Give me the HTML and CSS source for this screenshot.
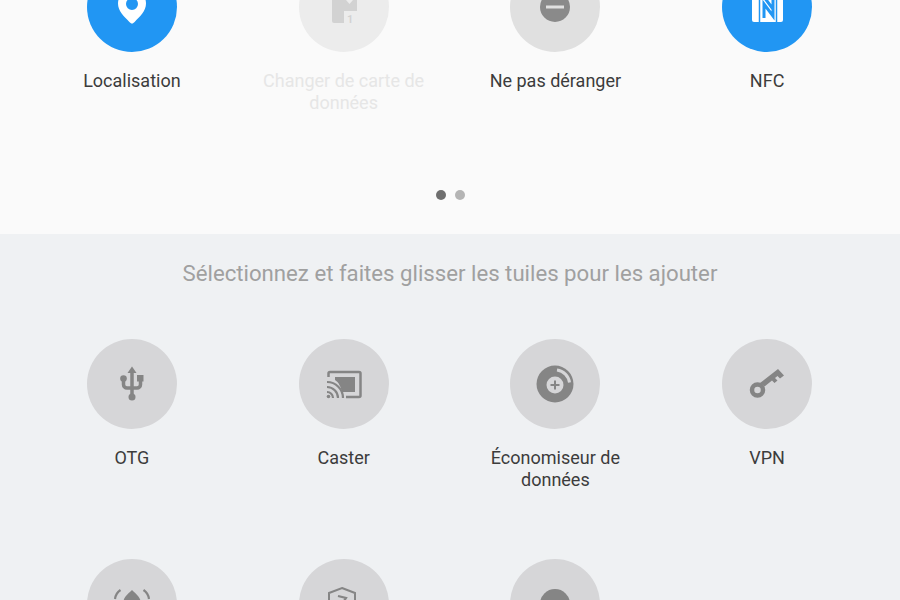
FILE: index.html
```html
<!DOCTYPE html>
<html lang="fr">
<head>
    <meta charset="UTF-8">
    <meta name="viewport" content="width=device-width, initial-scale=1.0">
    <title>Tuiles</title>
    <link rel="stylesheet" href="styles.css">
</head>
<body>
    <div class="active-panel">
        <div class="tile-grid">
            <div class="tile">
                <div class="tile-circle on">
                    <svg viewBox="0 0 90 90"><path fill="#fff" fill-rule="evenodd" d="M45 61.500c-1 0-1.800-.8-2.600-1.600C37 54.500 31 49 31 41.500 31 33.500 37.300 27 45 27s14 6.500 14 14.500c0 7.500-6 13-11.400 18.400-.8.800-1.600 1.600-2.600 1.600zM45 36a6 6 0 1 0 0 12 6 6 0 0 0 0-12z"/></svg>
                </div>
                <div class="tile-label">Localisation</div>
            </div>
            <div class="tile disabled">
                <div class="tile-circle">
                    <svg viewBox="0 0 90 90">
                        <path fill="#d2d2d2" d="M35 28h21a2 2 0 0 1 2 2v19H45v12H35a2 2 0 0 1-2-2V30a2 2 0 0 1 2-2z"/>
                        <path fill="#ececec" d="M47 38h7l-3.500 4z"/>
                        <text class="sim-num" x="48" y="61">1</text>
                    </svg>
                </div>
                <div class="tile-label">Changer de carte de données</div>
            </div>
            <div class="tile">
                <div class="tile-circle">
                    <svg viewBox="0 0 90 90">
                        <circle cx="45" cy="45" r="15" fill="#8a8a8a"/>
                        <rect x="36" y="43.500" width="18" height="3" fill="#e0e0e0"/>
                    </svg>
                </div>
                <div class="tile-label">Ne pas déranger</div>
            </div>
            <div class="tile">
                <div class="tile-circle on">
                    <svg viewBox="0 0 90 90">
                        <rect x="30" y="29" width="31" height="31" rx="2" fill="#fff"/>
                        <path fill="none" stroke="#2196f3" stroke-width="1.500" d="M37.500 60V29M54.500 29V60"/>
                        <path fill="none" stroke="#2196f3" stroke-width="3" d="M42 56V42l9 12V29M42 35l9 12"/>
                    </svg>
                </div>
                <div class="tile-label">NFC</div>
            </div>
        </div>
        <div class="page-dots">
            <span class="dot current"></span>
            <span class="dot"></span>
        </div>
    </div>

    <div class="spare-panel">
        <div class="spare-title">Sélectionnez et faites glisser les tuiles pour les ajouter</div>
        <div class="tile-grid">
            <div class="tile">
                <div class="tile-circle">
                    <svg viewBox="0 0 90 90">
                        <path fill="none" stroke="#858585" stroke-width="3.500" d="M45 32v27M36.500 40v5.500a3.500 3.500 0 0 0 3.500 3.500h10a3.500 3.500 0 0 0 3.500-3.500V40"/>
                        <path fill="#858585" d="M45 27.500l4.500 6.500h-9z"/>
                        <circle cx="36.500" cy="39.500" r="3.300" fill="#858585"/>
                        <rect x="50" y="36" width="6.500" height="6.500" fill="#858585"/>
                        <circle cx="45" cy="58" r="3.500" fill="#858585"/>
                    </svg>
                </div>
                <div class="tile-label">OTG</div>
            </div>
            <div class="tile">
                <div class="tile-circle">
                    <svg viewBox="0 0 90 90">
                        <path fill="none" stroke="#858585" stroke-width="2.500" d="M29.500 38v-3.500a1.500 1.500 0 0 1 1.500-1.500h29a1.500 1.500 0 0 1 1.500 1.500v22a1.500 1.500 0 0 1-1.500 1.500H47"/>
                        <path fill="#858585" d="M36 38h20v15H43c-1-5-3.500-10-7-12z"/>
                        <path fill="none" stroke="#858585" stroke-width="2.200" d="M28 43a16 16 0 0 1 16 16M28 48a11 11 0 0 1 11 11M28 53a6 6 0 0 1 6 6"/>
                        <circle cx="29.500" cy="57.500" r="1.800" fill="#858585"/>
                    </svg>
                </div>
                <div class="tile-label">Caster</div>
            </div>
            <div class="tile">
                <div class="tile-circle">
                    <svg viewBox="0 0 90 90">
                        <circle cx="45" cy="45" r="18.500" fill="#858585"/>
                        <path fill="none" stroke="#d6d6d8" stroke-width="3" d="M47 31a14.500 14.500 0 0 1 12.500 12.500"/>
                        <circle cx="45" cy="46" r="8.500" fill="#d6d6d8"/>
                        <path fill="none" stroke="#858585" stroke-width="2" d="M40.500 46h9M45 41.500v9"/>
                    </svg>
                </div>
                <div class="tile-label">Économiseur de données</div>
            </div>
            <div class="tile">
                <div class="tile-circle">
                    <svg viewBox="0 0 90 90">
                        <circle cx="35.500" cy="51" r="5.500" fill="none" stroke="#858585" stroke-width="4.500"/>
                        <path fill="#858585" d="M38 44L56 30l6 6.500-4 3-2.500-2.500-2.500 2 2.500 2.500-3 2.500-2.500-2.500-7.500 6z"/>
                    </svg>
                </div>
                <div class="tile-label">VPN</div>
            </div>
            <div class="tile">
                <div class="tile-circle">
                    <svg viewBox="0 0 90 90">
                        <path fill="#858585" d="M45 31c3 3 9 7 9 14a9 9 0 1 1-18 0c0-7 6-11 9-14z"/>
                        <path fill="none" stroke="#858585" stroke-width="2.200" d="M33.500 31c-3 2-5 5-5.500 9M56.500 31c3 2 5 5 5.500 9"/>
                    </svg>
                </div>
            </div>
            <div class="tile">
                <div class="tile-circle">
                    <svg viewBox="0 0 90 90">
                        <path fill="none" stroke="#858585" stroke-width="2" d="M43 29l13 5v14c0 7-6 11-13 13-7-2-13-6-13-13V34z"/>
                        <path fill="none" stroke="#858585" stroke-width="2.200" d="M39 37l8 2-4 6"/>
                    </svg>
                </div>
            </div>
            <div class="tile">
                <div class="tile-circle">
                    <svg viewBox="0 0 90 90">
                        <circle cx="45" cy="45" r="15" fill="#858585"/>
                        <rect x="36" y="43.500" width="18" height="3" fill="#d6d6d8"/>
                    </svg>
                </div>
            </div>
        </div>
    </div>
</body>
</html>
```

FILE: styles.css
```css
html {
    overflow: hidden;
}

body {
    margin: 0;
    height: 600px;
    overflow: hidden;
    font-family: Roboto, sans-serif;
    background-color: #eff1f3;
    color: #333;
}

.active-panel {
    height: 272px;
    margin-top: -38px;
    display: flex;
    flex-direction: column;
    background-color: #fafafa;
}

.tile-grid {
    display: grid;
    grid-template-columns: repeat(4, 211.75px);
    grid-auto-rows: 220px;
    padding: 0 26px;
}

.tile {
    display: flex;
    flex-direction: column;
    align-items: center;
}

.tile-circle {
    width: 90px;
    height: 90px;
    flex: none;
    border-radius: 50%;
    background-color: #e0e0e0;
}

.tile-circle svg {
    display: block;
    width: 90px;
    height: 90px;
}

.tile-circle.on {
    background-color: #2196f3;
}

.tile-label {
    margin-top: 18px;
    width: 190px;
    font-size: 18px;
    line-height: 21.500px;
    text-align: center;
    color: #3c3c3c;
}

.tile.disabled .tile-circle {
    background-color: #ececec;
}

.tile.disabled .tile-label {
    color: #e6e6e6;
}

.sim-num {
    font-size: 11px;
    font-weight: 600;
    fill: #d2d2d2;
}

.active-panel .tile-grid {
    height: 220px;
    flex: none;
}

.page-dots {
    display: flex;
    justify-content: center;
    gap: 9px;
    margin-top: 8px;
}

.dot {
    width: 10px;
    height: 10px;
    border-radius: 50%;
    background-color: #b4b4b4;
}

.dot.current {
    background-color: #6e6e6e;
}

.spare-panel {
    height: 366px;
    overflow: hidden;
}

.spare-panel .tile-circle {
    background-color: #d6d6d8;
}

.spare-title {
    padding-top: 26px;
    height: 79px;
    box-sizing: border-box;
    margin-bottom: 26px;
    text-align: center;
    font-size: 22.200px;
    line-height: 27px;
    color: #a0a0a0;
}
```
